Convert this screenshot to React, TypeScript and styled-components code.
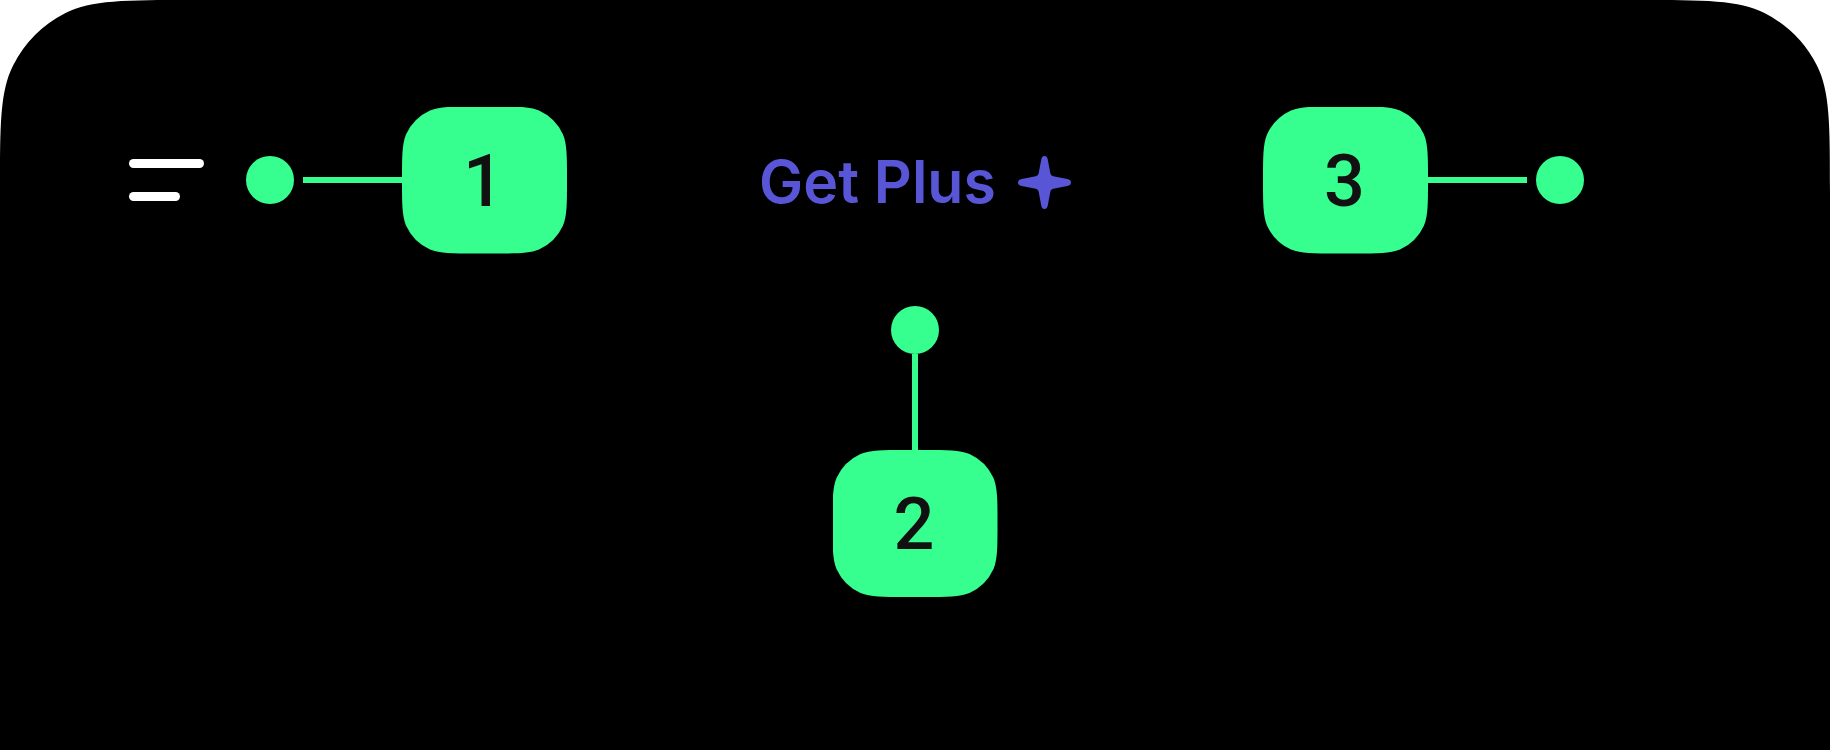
import React from "react";
import styled, { createGlobalStyle } from "styled-components";

const GREEN = "#37ff8f";

type Direction = "row" | "row-reverse" | "column";

const GlobalStyle = createGlobalStyle`
  *, *::before, *::after { box-sizing: border-box; }
  body { margin: 0; background: #fff; font-family: Inter, "Liberation Sans", sans-serif; }
`;

const Screen = styled.main`
  position: relative;
  min-height: 100vh;
  padding: 106px 129px 0;
  background: #000;
`;

const Corner = styled.svg<{ $side: "left" | "right" }>`
  position: absolute;
  top: 0;
  ${(p) => p.$side}: 0;
  width: 192px;
  height: 192px;
  ${(p) => (p.$side === "right" ? "transform: scaleX(-1);" : "")}
`;

const TopBar = styled.header`
  display: grid;
  grid-template-columns: 1fr auto 1fr;
  align-items: center;
  min-height: 148px;
`;

const Side = styled.div<{ $end?: boolean }>`
  display: flex;
  align-items: center;
  justify-content: ${(p) => (p.$end ? "flex-end" : "flex-start")};
  gap: 42px;
  padding-right: ${(p) => (p.$end ? "117px" : "0")};
`;

const MenuButton = styled.button`
  display: flex;
  flex-direction: column;
  gap: 24px;
  padding: 0;
  border: 0;
  background: none;
  cursor: pointer;
`;

const MenuLine = styled.span<{ $width: number }>`
  width: ${(p) => p.$width}px;
  height: 9px;
  border-radius: 5px;
  background: #fff;
`;

const Callout = styled.div<{ $direction: Direction }>`
  display: flex;
  flex-direction: ${(p) => p.$direction};
  align-items: center;
  gap: ${(p) => (p.$direction === "column" ? "0" : "9px")};
`;

const Dot = styled.span`
  width: 48px;
  height: 48px;
  border-radius: 50%;
  background: ${GREEN};
`;

const Tag = styled.div<{ $direction: Direction }>`
  display: flex;
  flex-direction: ${(p) => p.$direction};
  align-items: center;
`;

const Stem = styled.span<{ $vertical?: boolean }>`
  width: ${(p) => (p.$vertical ? "6px" : "99px")};
  height: ${(p) => (p.$vertical ? "96px" : "6px")};
  background: ${GREEN};
`;

const Badge = styled.span`
  display: flex;
  align-items: center;
  justify-content: center;
  width: 165px;
  height: 147px;
  padding: 3px 2px 0 0;
  background: ${GREEN};
  clip-path: path("M73 0C50 0 38 0 28 4A48 48 0 0 0 4 28C0 38 0 50 0 73V74C0 97 0 109 4 119A48 48 0 0 0 28 143C38 147 50 147 73 147H92C115 147 127 147 137 143A48 48 0 0 0 161 119C165 109 165 97 165 74V73C165 50 165 38 161 28A48 48 0 0 0 137 4C127 0 115 0 92 0Z");
  color: #111;
  font-family: Roboto, sans-serif;
  font-size: 72px;
  font-weight: 500;
  line-height: 88px;
`;

const PlusButton = styled.button`
  display: flex;
  align-items: center;
  gap: 22px;
  padding: 4px 0 0;
  border: 0;
  background: none;
  color: #5856d6;
  font-family: inherit;
  font-size: 59px;
  font-weight: 600;
  line-height: 72px;
  white-space: nowrap;
  cursor: pointer;
`;

const Center = styled.section`
  display: flex;
  justify-content: center;
  margin-top: 52px;
`;

function Marker({ label, direction }: { label: string; direction: Direction }) {
  return (
    <Callout $direction={direction}>
      <Dot />
      <Tag $direction={direction}>
        <Stem $vertical={direction === "column"} />
        <Badge>{label}</Badge>
      </Tag>
    </Callout>
  );
}

function ScreenCorner({ side }: { side: "left" | "right" }) {
  return (
    <Corner $side={side} viewBox="0 0 192 192" aria-hidden="true">
      <path
        d="M0 0H192C124.800 0 91.200 0 65.530 13.080A120 120 0 0 0 13.080 65.530C0 91.200 0 124.800 0 192Z"
        fill="#fff"
      />
    </Corner>
  );
}

function Sparkle() {
  return (
    <svg width="53" height="53" viewBox="0 0 53 53" aria-hidden="true">
      <path
        d="M26.500 0C28.500 0 29.400 1.300 29.700 3.200L32.400 17.400Q32.800 19.700 35.200 20.200L49.300 23.100C51.800 23.600 53 24.700 53 26.500S51.800 29.400 49.300 29.900L35.200 32.800Q32.800 33.300 32.400 35.600L29.700 49.800C29.400 51.700 28.500 53 26.500 53S23.600 51.700 23.300 49.800L20.600 35.600Q20.200 33.300 17.800 32.800L3.700 29.900C1.200 29.400 0 28.300 0 26.500S1.200 23.600 3.700 23.100L17.800 20.200Q20.200 19.700 20.600 17.400L23.300 3.200C23.600 1.300 24.500 0 26.500 0Z"
        fill="currentColor"
      />
    </svg>
  );
}

export default function App() {
  return (
    <>
      <GlobalStyle />
      <Screen>
        <ScreenCorner side="left" />
        <ScreenCorner side="right" />
        <TopBar>
          <Side>
            <MenuButton aria-label="Menu">
              <MenuLine $width={75} />
              <MenuLine $width={51} />
            </MenuButton>
            <Marker label="1" direction="row" />
          </Side>
          <PlusButton>
            Get Plus
            <Sparkle />
          </PlusButton>
          <Side $end>
            <Marker label="3" direction="row-reverse" />
          </Side>
        </TopBar>
        <Center>
          <Marker label="2" direction="column" />
        </Center>
      </Screen>
    </>
  );
}
